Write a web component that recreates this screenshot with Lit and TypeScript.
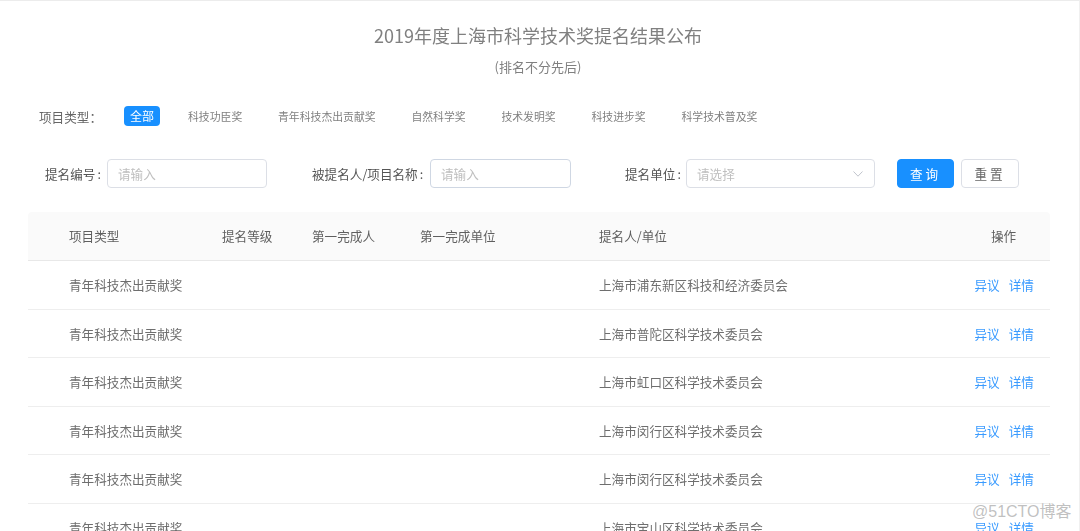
import { LitElement, html, css } from "lit";
import { customElement } from "lit/decorators.js";

const TABS = ["科技功臣奖", "青年科技杰出贡献奖", "自然科学奖", "技术发明奖", "科技进步奖", "科学技术普及奖"];
const ROWS = [
  "上海市浦东新区科技和经济委员会",
  "上海市普陀区科学技术委员会",
  "上海市虹口区科学技术委员会",
  "上海市闵行区科学技术委员会",
  "上海市闵行区科学技术委员会",
  "上海市宝山区科学技术委员会",
];

@customElement("app-root")
export class AppRoot extends LitElement {
  static styles = css`
    :host {
      display: block;
      width: 1080px;
      height: 531px;
      overflow: hidden;
      position: relative;
      background: #fff;
      box-sizing: border-box;
      border-top: 1px solid #ececec;
      border-right: 1px solid #f0f0f0;
      font-family: "Noto Sans CJK SC", "Noto Sans", sans-serif;
      color: #666;
    }
    .page {
      filter: blur(0.3px);
    }
    .title {
      margin: 0;
      padding-top: 21px;
      padding-right: 3px;
      height: 26px;
      line-height: 26px;
      text-align: center;
      font-size: 18px;
      font-weight: 400;
      color: #808080;
    }
    .sub {
      margin-top: 9px;
      height: 20px;
      line-height: 20px;
      padding-right: 3px;
      text-align: center;
      font-size: 13px;
      color: #808080;
    }
    .types {
      display: flex;
      align-items: center;
      height: 20px;
      margin-top: 29px;
      padding-left: 39px;
      font-size: 10.85px;
      color: #808080;
    }
    .types-label {
      width: 85px;
      font-size: 12.6px;
      color: #666;
    }
    .chip {
      width: 36px;
      height: 20px;
      line-height: 20px;
      text-align: center;
      border-radius: 4px;
      background: #1890ff;
      color: #fff;
      font-size: 12px;
      margin-right: 28px;
    }
    .tab {
      margin-right: 35.8px;
      white-space: nowrap;
    }
    .form {
      display: flex;
      align-items: center;
      height: 29px;
      margin-top: 33px;
      font-size: 12.6px;
      color: #555;
    }
    .label {
      white-space: nowrap;
      text-align: left;
    }
    .colon {
      margin-left: 2px;
    }
    .field {
      box-sizing: border-box;
      height: 29px;
      line-height: 27px;
      border: 1px solid #dcdfe6;
      border-radius: 4px;
      padding-left: 10px;
      color: #bfbfbf;
      background: #fff;
      display: flex;
      align-items: center;
      justify-content: space-between;
    }
    .f1 { margin-left: 45px; width: 62px; }
    .i1 { width: 160px; }
    .f2 { margin-left: 45px; width: 118px; }
    .i2 { width: 141px; border-color: #cfd7e3; }
    .f3 { margin-left: 54px; width: 61px; }
    .i3 { width: 189px; padding-right: 11px; }
    .btn {
      box-sizing: border-box;
      width: 57px;
      height: 29px;
      line-height: 27px;
      text-align: center;
      border-radius: 4px;
      letter-spacing: 3px;
    }
    .primary {
      margin-left: 22px;
      background: #1890ff;
      color: #fff;
      border: 1px solid #1890ff;
    }
    .plain {
      margin-left: 7px;
      width: 58px;
      border: 1px solid #dcdfe6;
      color: #666;
    }
    .table {
      margin: 24px 29px 0 28px;
      font-size: 12.6px;
    }
    .row {
      display: grid;
      grid-template-columns: 153px 90px 108px 179px 1fr 75px;
      box-sizing: border-box;
      height: 48.55px;
      align-items: center;
      padding-left: 41px;
      border-bottom: 1px solid #eeeeee;
      color: #6e6e6e;
    }
    .head {
      height: 49px;
      padding-bottom: 2px;
      background: #fafafa;
      border-bottom: 1px solid #e8e8e8;
      border-radius: 4px 4px 0 0;
      color: #5f5f5f;
    }
    .ops-head {
      padding-left: 16px;
    }
    .ops {
      display: flex;
      gap: 9px;
      margin-left: -0.5px;
      color: #3a9bff;
    }
    .wm {
      position: absolute;
      left: 972px;
      top: 501px;
      font-family: "Liberation Sans", "Noto Sans CJK SC", sans-serif;
      font-size: 16px;
      line-height: 20px;
      color: rgba(130, 130, 130, 0.5);
      white-space: nowrap;
    }
  `;

  render() {
    return html`
      <div class="page">
        <h1 class="title">2019年度上海市科学技术奖提名结果公布</h1>
        <div class="sub">(排名不分先后)</div>
        <div class="types">
          <span class="types-label">项目类型：</span>
          <span class="chip">全部</span>
          ${TABS.map((t) => html`<span class="tab">${t}</span>`)}
        </div>
        <div class="form">
          <span class="label f1">提名编号<span class="colon">:</span></span>
          <span class="field i1">请输入</span>
          <span class="label f2">被提名人/项目名称<span class="colon">:</span></span>
          <span class="field i2">请输入</span>
          <span class="label f3">提名单位<span class="colon">:</span></span>
          <span class="field i3">
            请选择
            <svg width="10" height="6" viewBox="0 0 10 6" fill="none" stroke="#c0c4cc" stroke-width="1">
              <path d="M0.5 0.5 L5 5.2 L9.5 0.5" />
            </svg>
          </span>
          <span class="btn primary">查询</span>
          <span class="btn plain">重置</span>
        </div>
        <div class="table">
          <div class="row head">
            <span>项目类型</span>
            <span>提名等级</span>
            <span>第一完成人</span>
            <span>第一完成单位</span>
            <span>提名人/单位</span>
            <span class="ops-head">操作</span>
          </div>
          ${ROWS.map(
            (r) => html`
              <div class="row">
                <span>青年科技杰出贡献奖</span>
                <span></span>
                <span></span>
                <span></span>
                <span>${r}</span>
                <span class="ops"><span>异议</span><span>详情</span></span>
              </div>
            `
          )}
        </div>
      </div>
      <div class="wm">@51CTO博客</div>
    `;
  }
}
